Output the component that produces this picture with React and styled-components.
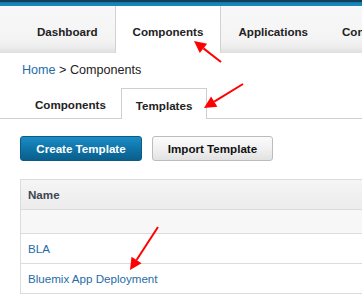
import React from "react";
import styled, { createGlobalStyle } from "styled-components";

const Global = createGlobalStyle`
  html, body { margin: 0; padding: 0; background: #fff; }
  body { width: 362px; height: 296px; overflow: hidden; font-family: "Liberation Sans", Arial, sans-serif; }
`;

const Page = styled.div`
  position: relative;
  width: 362px;
  height: 296px;
  overflow: hidden;
`;

const TopBar = styled.div`
  height: 6px;
  background: linear-gradient(#12405a 0%, #12405a 25%, #1681b8 45%, #1a88c0 100%);
`;

const Nav = styled.div`
  display: flex;
  align-items: stretch;
  height: 47px;
  padding-left: 20px;
  background: linear-gradient(#f8f8f8 0%, #f4f4f4 70%, #ececec 88%, #dedede 100%);
  white-space: nowrap;
`;

const NavTab = styled.div`
  display: flex;
  align-items: center;
  padding: 4px 17px 0;
  font-size: 11.6px;
  font-weight: bold;
  color: #222;
  background: ${(p) => (p.$active ? "#fff" : "transparent")};
  border-left: ${(p) => (p.$active ? "1px solid #d2d2d2" : "none")};
  border-right: ${(p) => (p.$active ? "1px solid #d2d2d2" : "none")};
`;

const NavSep = styled.div`
  align-self: center;
  margin-top: 4px;
  width: 1px;
  height: 10px;
  background: #d6d6d6;
`;

const Breadcrumb = styled.div`
  margin-top: 9px;
  padding-left: 22px;
  height: 16px;
  line-height: 16px;
  font-size: 12.6px;
  color: #222;
`;

const Link = styled.span`
  color: #1f6ca8;
`;

const SubTabs = styled.div`
  display: flex;
  margin-top: 10px;
  padding-left: 20px;
  height: 30px;
  border-bottom: 1px solid #cfcfcf;
`;

const SubTab = styled.div`
  display: flex;
  align-items: center;
  padding: 2px 14px 0;
  font-size: 11.6px;
  font-weight: bold;
  color: #222;
  box-sizing: border-box;
  height: ${(p) => (p.$active ? "31px" : "30px")};
  background: #fff;
  border: ${(p) => (p.$active ? "1px solid #cfcfcf" : "1px solid transparent")};
  border-bottom: none;
  margin-bottom: ${(p) => (p.$active ? "-1px" : "0")};
`;

const Buttons = styled.div`
  display: flex;
  gap: 10px;
  margin-top: 17px;
  padding-left: 20px;
`;

const Button = styled.div`
  display: flex;
  align-items: center;
  justify-content: center;
  box-sizing: border-box;
  height: 25px;
  width: ${(p) => p.$w}px;
  border-radius: 3px;
  font-size: 11.6px;
  font-weight: bold;
  color: ${(p) => (p.$primary ? "#fff" : "#111")};
  background: ${(p) =>
    p.$primary
      ? "linear-gradient(#1b8dc6 0%, #0f74a8 50%, #0a5f8c 100%)"
      : "linear-gradient(#fbfbfb 0%, #f1f1f1 50%, #e2e2e2 100%)"};
  border: 1px solid ${(p) => (p.$primary ? "#0b5b86" : "#bcbcbc")};
`;

const Table = styled.div`
  margin-top: 18px;
  margin-left: 20px;
  border-top: 1px solid #dcdcdc;
  border-left: 1px solid #dcdcdc;
`;

const Row = styled.div`
  display: flex;
  align-items: center;
  box-sizing: border-box;
  height: ${(p) => p.$h}px;
  padding-left: 7px;
  border-bottom: 1px solid #dcdcdc;
  font-size: 11.6px;
  font-weight: ${(p) => (p.$head ? "bold" : "normal")};
  color: ${(p) => (p.$head ? "#3d4650" : "#1f6ca8")};
  background: ${(p) =>
    p.$head ? "linear-gradient(#f5f5f5, #ececec)" : p.$grey ? "#f7f7f7" : "#fff"};
`;

const Annotations = styled.svg`
  position: absolute;
  left: 0;
  top: 0;
  pointer-events: none;
`;

function Arrow({ x1, y1, x2, y2 }) {
  const dx = x2 - x1;
  const dy = y2 - y1;
  const len = Math.hypot(dx, dy);
  const ux = dx / len;
  const uy = dy / len;
  const hl = 12;
  const hw = 6;
  const bx = x2 - ux * hl;
  const by = y2 - uy * hl;
  const px = -uy * hw;
  const py = ux * hw;
  return (
    <g>
      <line x1={x1} y1={y1} x2={bx} y2={by} stroke="#ff0000" strokeWidth="2" />
      <polygon
        points={`${x2},${y2} ${bx + px},${by + py} ${bx - px},${by - py}`}
        fill="#ff0000"
      />
    </g>
  );
}

export default function App() {
  return (
    <Page>
      <Global />
      <TopBar />
      <Nav>
        <NavTab>Dashboard</NavTab>
        <NavTab $active>Components</NavTab>
        <NavTab>Applications</NavTab>
        <NavSep />
        <NavTab>Configuration</NavTab>
      </Nav>
      <Breadcrumb>
        <Link>Home</Link> &gt; Components
      </Breadcrumb>
      <SubTabs>
        <SubTab>Components</SubTab>
        <SubTab $active>Templates</SubTab>
      </SubTabs>
      <Buttons>
        <Button $primary $w={122}>Create Template</Button>
        <Button $w={121}>Import Template</Button>
      </Buttons>
      <Table>
        <Row $head $h={30}>Name</Row>
        <Row $grey $h={24} />
        <Row $h={30}>BLA</Row>
        <Row $h={30}>Bluemix App Deployment</Row>
      </Table>
      <Annotations width="362" height="296" viewBox="0 0 362 296">
        <Arrow x1={221} y1={62} x2={194} y2={41} />
        <Arrow x1={243} y1={84} x2={204} y2={108} />
        <Arrow x1={158} y1={227} x2={130} y2={270} />
      </Annotations>
    </Page>
  );
}
